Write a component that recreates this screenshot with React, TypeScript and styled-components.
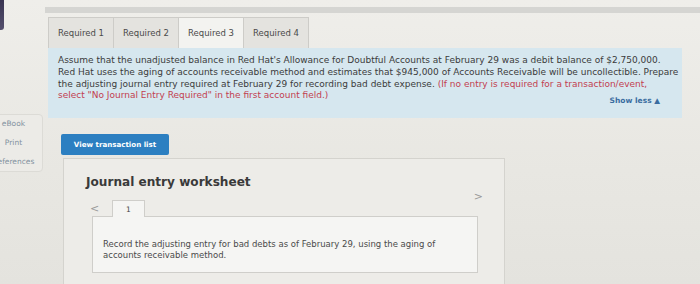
import styled, { createGlobalStyle } from 'styled-components';

const GlobalStyle = createGlobalStyle`
  html, body {
    margin: 0;
    padding: 0;
    background: #e8e7e2;
  }
  #root {
    width: 700px;
    height: 284px;
    overflow: hidden;
  }
`;

const Page = styled.div`
  display: flex;
  width: 700px;
  height: 284px;
  font-family: 'DejaVu Sans', Verdana, sans-serif;
  background: linear-gradient(180deg, #efeeea 0%, #e8e7e2 60%, #e4e3de 100%);
`;

const LeftColumn = styled.div`
  width: 45px;
  flex-shrink: 0;
  display: flex;
  flex-direction: column;
`;

const Corner = styled.div`
  width: 4px;
  height: 30px;
  background: linear-gradient(180deg, #3a3552 0%, #55506e 100%);
  border-bottom-right-radius: 3px;
`;

const Sidebar = styled.div`
  margin: 84px 0 0 -16px;
  width: 57px;
  padding: 4px 0;
  display: flex;
  flex-direction: column;
  gap: 9px;
  border: 1px solid #dcdbd6;
  border-radius: 4px;
  background: #ecebe7;
`;

const SideLink = styled.div`
  text-align: center;
  font-size: 7.5px;
  color: #8392a0;
  line-height: 10px;
  white-space: nowrap;
`;

const Main = styled.div`
  flex: 1;
  display: flex;
  flex-direction: column;
`;

const TopBar = styled.div`
  margin-top: 7px;
  height: 6px;
  background: #d5d5d2;
`;

const TabRow = styled.div`
  display: flex;
  margin: 4px 0 0 3px;
`;

const Tab = styled.div<{ $active?: boolean }>`
  width: 66px;
  height: 31px;
  box-sizing: border-box;
  display: flex;
  align-items: center;
  justify-content: center;
  font-size: 8.5px;
  color: #4a4a4a;
  background: ${(p) => (p.$active ? '#f3f3f0' : '#e4e3df')};
  border: 1px solid #cdccc8;
  border-bottom: none;
  margin-right: -1px;
`;

const Prompt = styled.div`
  margin-left: 3px;
  width: 634px;
  height: 70px;
  box-sizing: border-box;
  padding: 7px 4px 0 10px;
  background: #d6e7ef;
  display: flex;
  flex-direction: column;
`;

const PromptText = styled.p`
  margin: 0;
  font-size: 9px;
  line-height: 11.8px;
  color: #3b3b3b;
  white-space: nowrap;
`;

const Hint = styled.span`
  color: #c2404f;
`;

const ShowLess = styled.div`
  align-self: flex-end;
  margin: -6px 18px 0 0;
  font-size: 7.5px;
  font-weight: bold;
  color: #3a6c9f;
`;

const ViewButton = styled.button`
  margin: 16px 0 0 16px;
  width: 108px;
  height: 21px;
  border: none;
  border-radius: 2px;
  background: #2c7fc1;
  color: #ffffff;
  font-family: 'DejaVu Sans', Verdana, sans-serif;
  font-size: 7.1px;
  font-weight: bold;
  padding: 0;
`;

const Worksheet = styled.div`
  margin: 3px 0 0 18px;
  width: 442px;
  flex: 1;
  box-sizing: border-box;
  border: 1px solid #d4d3ce;
  border-bottom: none;
  background: #edece8;
  padding: 15px 27px 0 28px;
`;

const Heading = styled.h2`
  margin: 0 0 0 -6px;
  font-size: 12.1px;
  font-weight: bold;
  color: #3a3a3a;
  line-height: 16px;
`;

const NavRow = styled.div`
  position: relative;
  display: flex;
  align-items: flex-end;
  height: 26px;
  margin-top: 0;
`;

const Arrow = styled.span<{ $side: 'left' | 'right' }>`
  position: absolute;
  ${(p) => (p.$side === 'left' ? 'left: -2px; top: 12px;' : 'right: -6px; top: 0;')}
  font-size: 11px;
  color: #9a9a9a;
`;

const StepTab = styled.div`
  margin-left: 20px;
  width: 33px;
  height: 17px;
  box-sizing: border-box;
  border: 1px solid #cfceca;
  border-bottom: none;
  background: #f5f5f3;
  display: flex;
  justify-content: center;
  padding-top: 4px;
  font-size: 7.5px;
  color: #444;
  position: relative;
  z-index: 1;
  margin-bottom: -1px;
`;

const EntryBox = styled.div`
  width: 386px;
  height: 57px;
  box-sizing: border-box;
  border: 1px solid #cfceca;
  background: #f5f5f3;
  padding: 22px 10px 0 10px;
`;

const EntryText = styled.p`
  margin: 0;
  font-size: 8.5px;
  line-height: 11px;
  color: #4a4a4a;
  white-space: nowrap;
`;

const App = () => {
  return (
    <>
      <GlobalStyle />
      <Page>
        <LeftColumn>
          <Corner />
          <Sidebar>
            <SideLink>eBook</SideLink>
            <SideLink>Print</SideLink>
            <SideLink>References</SideLink>
          </Sidebar>
        </LeftColumn>
        <Main>
          <TopBar />
          <TabRow>
            <Tab>Required 1</Tab>
            <Tab>Required 2</Tab>
            <Tab $active>Required 3</Tab>
            <Tab>Required 4</Tab>
          </TabRow>
          <Prompt>
            <PromptText>
              Assume that the unadjusted balance in Red Hat's Allowance for Doubtful Accounts at February 29 was a debit balance of $2,750,000.
              <br />
              Red Hat uses the aging of accounts receivable method and estimates that $945,000 of Accounts Receivable will be uncollectible. Prepare
              <br />
              the adjusting journal entry required at February 29 for recording bad debt expense.{' '}
              <Hint>(If no entry is required for a transaction/event,</Hint>
              <br />
              <Hint>select "No Journal Entry Required" in the first account field.)</Hint>
            </PromptText>
            <ShowLess>Show less ▲</ShowLess>
          </Prompt>
          <ViewButton>View transaction list</ViewButton>
          <Worksheet>
            <Heading>Journal entry worksheet</Heading>
            <NavRow>
              <Arrow $side="left">&lt;</Arrow>
              <StepTab>1</StepTab>
              <Arrow $side="right">&gt;</Arrow>
            </NavRow>
            <EntryBox>
              <EntryText>
                Record the adjusting entry for bad debts as of February 29, using the aging of
                <br />
                accounts receivable method.
              </EntryText>
            </EntryBox>
          </Worksheet>
        </Main>
      </Page>
    </>
  );
};

export default App;
